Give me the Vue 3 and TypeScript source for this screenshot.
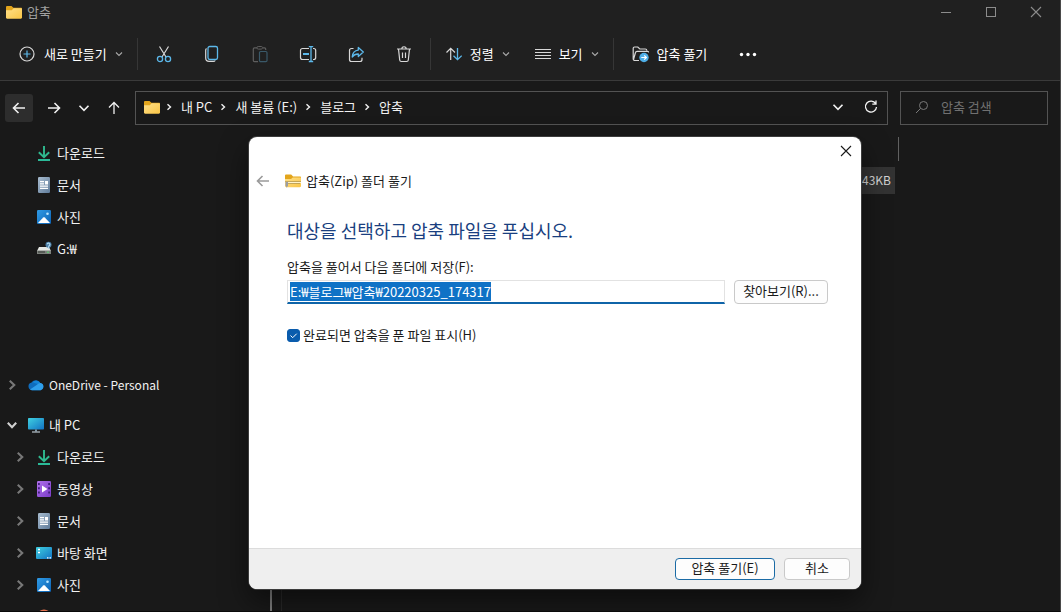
<script setup lang="ts">
import { onMounted, ref } from 'vue'

interface TreeItem {
  label: string
  icon: string
  level: number
  state?: 'open' | 'closed'
  look?: string
}

const quickItems: TreeItem[] = [
  { label: '다운로드', icon: 'download', level: 1 },
  { label: '문서', icon: 'document', level: 1 },
  { label: '사진', icon: 'picture', level: 1 },
  { label: 'G:₩', icon: 'drive', level: 1 },
]

const treeItems: TreeItem[] = [
  { label: 'OneDrive - Personal', icon: 'cloud', level: 0, state: 'closed', look: 'latin' },
  { label: '내 PC', icon: 'pc', level: 0, state: 'open', look: 'spaced' },
  { label: '다운로드', icon: 'download', level: 1, state: 'closed' },
  { label: '동영상', icon: 'video', level: 1, state: 'closed' },
  { label: '문서', icon: 'document', level: 1, state: 'closed' },
  { label: '바탕 화면', icon: 'desktop', level: 1, state: 'closed' },
  { label: '사진', icon: 'picture', level: 1, state: 'closed' },
  { label: '', icon: 'music', level: 1 },
]

const iconCommands = [
  { icon: 'cut', disabled: false },
  { icon: 'copy', disabled: false },
  { icon: 'paste', disabled: true },
  { icon: 'rename', disabled: false },
  { icon: 'share', disabled: false },
  { icon: 'trash', disabled: false },
]

const crumbs = ['내 PC', '새 볼륨 (E:)', '블로그', '압축']

const path = ref('E:₩블로그₩압축₩20220325_174317')
const showFiles = ref(true)
const query = ref('')
const pathInput = ref<HTMLInputElement | null>(null)

onMounted(() => {
  pathInput.value?.focus()
  pathInput.value?.select()
})
</script>

<template>
  <svg class="sprite" aria-hidden="true">
    <defs>
      <linearGradient id="gFolder" x1="0" y1="0" x2="1" y2="1"><stop offset="0" stop-color="#ffe08a" /><stop offset="1" stop-color="#f9c545" /></linearGradient>
      <linearGradient id="gDoc" x1="0" y1="0" x2="1" y2="1"><stop offset="0" stop-color="#a9bdd0" /><stop offset="1" stop-color="#5f7b99" /></linearGradient>
      <linearGradient id="gPic" x1="0" y1="0" x2="1" y2="1"><stop offset="0" stop-color="#2f9be6" /><stop offset="1" stop-color="#0c62b4" /></linearGradient>
      <linearGradient id="gPc" x1="0" y1="0" x2="1" y2="1"><stop offset="0" stop-color="#3fd0e0" /><stop offset="1" stop-color="#1272c4" /></linearGradient>
      <linearGradient id="gVid" x1="0" y1="0" x2="1" y2="1"><stop offset="0" stop-color="#b070ea" /><stop offset="1" stop-color="#7a3cc8" /></linearGradient>
    </defs>
    <symbol id="folder" viewBox="0 0 18 16">
      <path d="M1 3.2C1 2.3 1.6 2 2.3 2h4.2l1.9 1.8H16c.7 0 1 .5 1 1V8H1z" fill="#e3a51c" />
      <path d="M1 6.2h5.8L8.6 4.3H16c.7 0 1 .4 1 1v8.200c0 .7-.4 1.200-1.200 1.200H2.200c-.8 0-1.200-.5-1.200-1.200z" fill="url(#gFolder)" />
    </symbol>
    <symbol id="zip" viewBox="0 0 18 16">
      <path d="M1 2.500C1 1.800 1.500 1.400 2.200 1.400h5l1.900 2H16c.7 0 1 .5 1 1V8H1z" fill="#e3a51c" />
      <path d="M1 6h6l1.800-1.500H16c.7 0 1 .4 1 1v7.500c0 .7-.4 1.200-1.200 1.200H2.200C1.400 14.200 1 13.700 1 13z" fill="url(#gFolder)" />
      <path d="M1.500 8.500h15" stroke="#8a7a4c" stroke-width="1" stroke-dasharray="1 1" />
      <path d="M2 9.500h15" stroke="#fff3cb" stroke-width="1" />
      <path d="M2.500 10.500h14" stroke="#8a7a4c" stroke-width="1" stroke-dasharray="1 1" />
      <path d="M1.500 9h2.500v3.500l-1.200 2.300-1.300-2.300z" fill="#9b9da2" />
    </symbol>
    <symbol id="download" viewBox="0 0 16 16">
      <path d="M8 1v11M2.800 7.200 8 12.200l5.200-5" stroke="#2fb98f" stroke-width="1.900" fill="none" />
      <path d="M2 15h12" stroke="#2dc3a0" stroke-width="1.900" />
    </symbol>
    <symbol id="document" viewBox="0 0 16 16">
      <rect x="2" y="0" width="12" height="16" rx="1.200" fill="url(#gDoc)" />
      <path d="M4 4.700h4M4 6.900h4M4 9.100h8M4 11.300h8" stroke="#fff" stroke-width="1.200" />
      <rect x="9" y="4" width="3" height="3.500" fill="#fff" />
    </symbol>
    <symbol id="picture" viewBox="0 0 16 16">
      <rect x="1" y="1" width="14" height="14" rx="1.200" fill="url(#gPic)" />
      <path d="M2 14 7.200 8.600c.5-.5 1.100-.5 1.600 0L14 14z" fill="#fff" />
      <circle cx="11.500" cy="4.800" r="1.300" fill="#b9e6ff" />
    </symbol>
    <symbol id="drive" viewBox="0 0 16 16">
      <path d="M3 6h10l2 4H1z" fill="#e6e8e4" />
      <path d="M1 9.500h14v3.500H1z" fill="#7d817c" />
      <path d="M2 11h7" stroke="#313431" /><path d="M11 11.200h2" stroke="#54da70" />
      <circle cx="12.500" cy="3.800" r="3" fill="#4d7fa6" />
      <path d="M11.300 3.300a1.300 1.300 0 1 1 1.900 1.300c-.6.400-.6.900-.6 3.400" fill="none" stroke="#b4dbf2" stroke-width="1.200" />
    </symbol>
    <symbol id="cloud" viewBox="0 0 16 16">
      <path d="M4 13.200a3.900 3.900 0 0 1-.4-7.700A5 5 0 0 1 12.200 6a3.700 3.700 0 0 1 .4 7.200z" fill="#0f6cbd" />
      <path d="M4.600 5.200A5 5 0 0 1 12.200 6c-1.200 0-2 .4-2.700 1z" fill="#1484d8" />
      <path d="M2 12.500 9 7.800A3.800 3.800 0 0 1 12.600 6a3.700 3.700 0 0 1 0 7.200H4c-.8 0-1.500-.3-2-.7z" fill="#2f9fec" />
    </symbol>
    <symbol id="pc" viewBox="0 0 16 16">
      <rect x="0" y="1" width="16" height="11.500" rx=".8" fill="url(#gPc)" />
      <path d="M7 12.500h2v2H7z" fill="#7f98a8" /><path d="M4 15h8" stroke="#b7c4cc" stroke-width="1.200" />
    </symbol>
    <symbol id="video" viewBox="0 0 16 16">
      <rect x="1" y="0" width="14" height="16" rx="1.200" fill="url(#gVid)" />
      <path d="M2.900 2v13M13.100 2v13" stroke="#43207c" stroke-width="1.800" stroke-dasharray="2 2.300" />
      <path d="M6 4.500v7L11.500 8z" fill="#fff" />
    </symbol>
    <symbol id="desktop" viewBox="0 0 16 16">
      <rect x="0" y="2" width="16" height="12" rx="1" fill="url(#gPc)" />
      <path d="M2 4.500h2M2 7.500h2" stroke="#fff" stroke-width="1.600" />
      <path d="M11 12.800h1.500M13.500 12.800H15" stroke="#fff" stroke-width="1.200" />
    </symbol>
    <symbol id="music" viewBox="0 0 16 16"><circle cx="8" cy="8" r="7.500" fill="#e3714f" /></symbol>

    <symbol id="new" viewBox="0 0 18 18">
      <circle cx="9" cy="9" r="7" fill="none" stroke="#d8d8d8" stroke-width="1.200" />
      <path d="M9 5.500v7M5.500 9h7" stroke="#5cb8ea" stroke-width="1.200" />
    </symbol>
    <symbol id="cut" viewBox="0 0 18 18">
      <path d="M4.500 1.500 11 12M13.500 1.500 7 12" stroke="#d8d8d8" stroke-width="1.200" />
      <circle cx="5" cy="14" r="2.600" fill="none" stroke="#5cb8ea" stroke-width="1.300" />
      <circle cx="13" cy="14" r="2.600" fill="none" stroke="#5cb8ea" stroke-width="1.300" />
    </symbol>
    <symbol id="copy" viewBox="0 0 18 18">
      <path d="M3.500 3.500C2.900 4 2.700 4.500 2.700 5.200V13c0 2.200 1.200 3.400 3.400 3.400h4.400c.8 0 1.300-.3 1.700-.9" fill="none" stroke="#d8d8d8" stroke-width="1.200" />
      <rect x="5" y="1.500" width="9.500" height="13" rx="1.800" fill="none" stroke="#5cb8ea" stroke-width="1.300" />
    </symbol>
    <symbol id="paste" viewBox="0 0 18 18">
      <path d="M6 2.800H3.500c-.7 0-1.200.5-1.200 1.200v11.500c0 .7.5 1.200 1.200 1.200H7M12 2.800h1.500c.7 0 1.200.5 1.200 1.200v1" fill="none" stroke="#5e5e5e" stroke-width="1.200" />
      <rect x="6" y="1.500" width="5.500" height="2.600" rx="1.200" fill="none" stroke="#5e5e5e" />
      <rect x="8.500" y="6.500" width="7.500" height="10.200" rx="1.200" fill="none" stroke="#3a5969" stroke-width="1.200" />
    </symbol>
    <symbol id="rename" viewBox="0 0 18 18">
      <path d="M10 3.500H3.500c-1.200 0-2 .8-2 2v7c0 1.200.8 2 2 2H10M14 3.500h.7c1.200 0 2 .8 2 2v7c0 1.200-.8 2-2 2H14" fill="none" stroke="#d8d8d8" stroke-width="1.200" />
      <path d="M4 9h6" stroke="#5cb8ea" stroke-width="2" />
      <path d="M12 2v14.500M9.800 1.700h4.400M9.800 16.500h4.400" stroke="#5cb8ea" stroke-width="1.300" />
    </symbol>
    <symbol id="share" viewBox="0 0 18 18">
      <path d="M6.500 3.500h-2c-1.200 0-2 .8-2 2v9c0 1.200.8 2 2 2h8.500c1.200 0 2-.8 2-2v-1.700" fill="none" stroke="#d8d8d8" stroke-width="1.200" />
      <path d="M11.300 2.500 16.300 7l-5 4.500V9C8.500 8.900 6.700 9.900 5.200 12c.3-4 2.600-6.600 6.100-6.900z" fill="none" stroke="#5cb8ea" stroke-width="1.300" stroke-linejoin="round" />
    </symbol>
    <symbol id="trash" viewBox="0 0 18 18">
      <path d="M2 4h14M6.800 4c0-3 4.400-3 4.400 0M3.500 4l1.200 11c.1.900.7 1.500 1.600 1.500h5.400c.9 0 1.500-.6 1.600-1.500l1.200-11M7.500 7.500v5.500M10.500 7.500v5.500" fill="none" stroke="#d8d8d8" stroke-width="1.200" />
    </symbol>
    <symbol id="sort" viewBox="0 0 16 16">
      <path d="M4.700 14V2.500M.5 6.500l4.200-4.200L9 6.500" fill="none" stroke="#d8d8d8" stroke-width="1.200" />
      <path d="M11.500 2v11.500M7.500 9.700l4 4 4.200-4" fill="none" stroke="#5cb8ea" stroke-width="1.300" />
    </symbol>
    <symbol id="list" viewBox="0 0 16 16">
      <path d="M0 3.500h16M0 6.500h16M0 9.500h16M0 12.500h16" stroke="#d8d8d8" />
    </symbol>
    <symbol id="extract" viewBox="0 0 18 18">
      <path d="M8 15.500H4c-1 0-1.800-.8-1.800-1.800V3.300c0-.8.600-1.300 1.300-1.300h3.300l2 2h5.500c1 0 1.500.7 1.500 1.500M2.500 14.500l2-7c.2-.8.700-1.200 1.500-1.200h10.500c.8 0 1.100.4 1 1.200" fill="none" stroke="#d8d8d8" stroke-width="1.200" />
      <circle cx="13" cy="12.500" r="4.700" fill="#4eaee6" />
      <path d="M10.300 12.500h5M13.200 10.300l2.200 2.200-2.200 2.200" fill="none" stroke="#fff" stroke-width="1.200" />
    </symbol>
    <symbol id="chevron" viewBox="0 0 8 8"><path d="m1 2.500 3 3 3-3" fill="none" stroke="currentColor" stroke-width="1.100" /></symbol>
    <symbol id="angle" viewBox="0 0 8 8"><path d="M2.500 1.200 5.500 4 2.500 6.800" fill="none" stroke="currentColor" stroke-width="1.400" /></symbol>
    <symbol id="arrow" viewBox="0 0 16 16"><path d="M14 8H2.500M7.500 3 2.500 8l5 5" fill="none" stroke="currentColor" stroke-width="1.600" /></symbol>
    <symbol id="cross" viewBox="0 0 12 12"><path d="m1 1 10 10M11 1 1 11" fill="none" stroke="currentColor" stroke-width="1.100" /></symbol>
  </svg>

  <div class="window">
    <header class="titlebar">
      <svg class="i18x16"><use href="#folder" /></svg>
      <h1 class="window-title">압축</h1>
      <div class="controls">
        <button type="button" aria-label="최소화"><svg class="i12" viewBox="0 0 12 12"><path d="M1 6.500h10" stroke="currentColor" /></svg></button>
        <button type="button" aria-label="최대화"><svg class="i12" viewBox="0 0 12 12"><rect x="1.500" y="1.500" width="9" height="9" fill="none" stroke="currentColor" /></svg></button>
        <button type="button" aria-label="닫기"><svg class="i12"><use href="#cross" /></svg></button>
      </div>
    </header>

    <div class="commands">
      <button type="button" class="command"><svg class="i18"><use href="#new" /></svg><span>새로 만들기</span><svg class="i8"><use href="#chevron" /></svg></button>
      <span class="rule"></span>
      <button v-for="c in iconCommands" :key="c.icon" type="button" class="icon-command" :disabled="c.disabled" :aria-label="c.icon">
        <svg class="i18"><use :href="'#' + c.icon" /></svg>
      </button>
      <span class="rule"></span>
      <button type="button" class="command"><svg class="i16"><use href="#sort" /></svg><span>정렬</span><svg class="i8"><use href="#chevron" /></svg></button>
      <button type="button" class="command"><svg class="i16"><use href="#list" /></svg><span>보기</span><svg class="i8"><use href="#chevron" /></svg></button>
      <span class="rule"></span>
      <button type="button" class="command extract"><svg class="i18"><use href="#extract" /></svg><span>압축 풀기</span></button>
      <button type="button" class="icon-command" aria-label="더 보기">
        <svg class="i18" viewBox="0 0 18 18"><circle cx="2.500" cy="9.500" r="1.700" fill="#fff" /><circle cx="9" cy="9.500" r="1.700" fill="#fff" /><circle cx="15.500" cy="9.500" r="1.700" fill="#fff" /></svg>
      </button>
    </div>

    <nav class="navigation">
      <button type="button" class="nav-button current" aria-label="뒤로"><svg class="i16"><use href="#arrow" /></svg></button>
      <button type="button" class="nav-button" aria-label="앞으로"><svg class="i16 flip"><use href="#arrow" /></svg></button>
      <button type="button" class="nav-button narrow" aria-label="최근 위치"><svg class="i12"><use href="#chevron" /></svg></button>
      <button type="button" class="nav-button" aria-label="위로"><svg class="i16" viewBox="0 0 16 16"><path d="M8 14V2.500M3 7.500l5-5 5 5" fill="none" stroke="currentColor" stroke-width="1.300" /></svg></button>
      <div class="address">
        <svg class="i18x16"><use href="#folder" /></svg>
        <ol class="crumbs">
          <li v-for="c in crumbs" :key="c"><svg class="i8"><use href="#angle" /></svg><a href="#">{{ c }}</a></li>
        </ol>
        <button type="button" class="address-button" aria-label="이전 위치"><svg class="i12"><use href="#chevron" /></svg></button>
        <button type="button" class="address-button" aria-label="새로 고침">
          <svg class="i16" viewBox="0 0 16 16"><path d="M12.700 4.700A5.500 5.500 0 1 0 13.500 8M13 1.500v3.700H9.300" fill="none" stroke="currentColor" stroke-width="1.300" /></svg>
        </button>
      </div>
      <label class="search">
        <svg class="i14" viewBox="0 0 14 14"><circle cx="8.500" cy="5.500" r="4" fill="none" stroke="currentColor" /><path d="M5.500 8.500 1 13" stroke="currentColor" /></svg>
        <input v-model="query" type="search" placeholder="압축 검색" aria-label="압축 검색" />
      </label>
    </nav>

    <div class="content">
      <aside class="sidebar">
        <ul class="tree quick">
          <li v-for="item in quickItems" :key="item.label" class="tree-row nested">
            <span class="expander"></span>
            <svg class="i16"><use :href="'#' + item.icon" /></svg>
            <span>{{ item.label }}</span>
          </li>
        </ul>
        <ul class="tree">
          <li v-for="item in treeItems" :key="item.icon" class="tree-row" :class="[item.look, { nested: item.level === 1 }]">
            <span class="expander" :class="item.state"><svg v-if="item.state" class="i12"><use href="#angle" /></svg></span>
            <svg class="i16"><use :href="'#' + item.icon" /></svg>
            <span>{{ item.label }}</span>
          </li>
        </ul>
      </aside>
      <main class="files">
        <div class="columns"><span class="c-name"></span><span class="c-date"></span><span class="c-type"></span><span class="c-size"></span></div>
        <div class="file-row">543KB</div>
      </main>
    </div>

    <section class="dialog" role="dialog" aria-labelledby="dialog-title">
      <div class="dialog-top"><button type="button" class="dialog-close" aria-label="닫기"><svg class="i12"><use href="#cross" /></svg></button></div>
      <header class="dialog-header">
        <button type="button" class="dialog-back" aria-label="뒤로" disabled><svg class="i16"><use href="#arrow" /></svg></button>
        <svg class="i18x16"><use href="#zip" /></svg>
        <span id="dialog-title">압축(Zip) 폴더 풀기</span>
      </header>
      <form class="dialog-body" @submit.prevent>
        <h2>대상을 선택하고 압축 파일을 푸십시오.</h2>
        <label class="path-label" for="path">압축을 풀어서 다음 폴더에 저장(F):</label>
        <div class="path-row">
          <input id="path" ref="pathInput" v-model="path" type="text" spellcheck="false" />
          <button type="button" class="push browse">찾아보기(R)...</button>
        </div>
        <label class="check">
          <input v-model="showFiles" type="checkbox" />
          <svg v-if="showFiles" class="tick" viewBox="0 0 13 13"><path d="m3.500 6.500 2.200 2.200 4-4" fill="none" stroke="#fff" /></svg>
          <span>완료되면 압축을 푼 파일 표시(H)</span>
        </label>
      </form>
      <footer class="dialog-footer">
        <button type="button" class="push primary">압축 풀기(E)</button>
        <button type="button" class="push cancel">취소</button>
      </footer>
    </section>
  </div>
</template>

<style>
body {
  margin: 0;
  background: #191919;
}
</style>

<style scoped>
.window,
.window * {
  box-sizing: border-box;
}
.window {
  position: relative;
  display: flex;
  flex-direction: column;
  height: 100vh;
  overflow: hidden;
  background: #191919;
  border-right: 1px solid #4a4a4a;
  border-bottom: 1px solid #0a0a0a;
  color: #f2f2f2;
  font: 13px/20px "Noto Sans CJK KR", sans-serif;
}
button,
input {
  font: inherit;
  color: inherit;
  margin: 0;
}
button {
  display: flex;
  align-items: center;
  justify-content: center;
  padding: 0;
  border: 0;
  background: none;
  white-space: nowrap;
}
svg { flex: none; display: block; }
.sprite { position: absolute; width: 0; height: 0; }
.i8 { width: 8px; height: 8px; }
.i12 { width: 12px; height: 12px; }
.i14 { width: 14px; height: 14px; }
.i16 { width: 16px; height: 16px; }
.i18 { width: 18px; height: 18px; }
.i18x16 { width: 18px; height: 16px; }
.flip { transform: rotate(180deg); }

.titlebar {
  display: flex;
  align-items: center;
  flex: none;
  height: 23px;
  padding-left: 5px;
  gap: 4px;
  background: #202020;
}
.window-title {
  margin: 0;
  font-size: 13px;
  line-height: 20px;
  font-weight: 400;
  color: #a0a0a0;
}
.controls { display: flex; margin-left: auto; padding-right: 2px; color: #8c8c8c; }
.controls button { width: 45px; height: 22px; }

.commands {
  display: flex;
  align-items: center;
  flex: none;
  height: 58px;
  padding: 5px 5px 0;
  background: #202020;
  border-bottom: 1px solid #3a3a3a;
}
.command { height: 36px; padding: 0 12px 0 13px; gap: 8px; color: #fff; }
.command .i8 { color: #a8a8a8; }
.extract { margin: 0 5px 0 2px; }
.icon-command { width: 48px; height: 36px; }
.rule { width: 1px; height: 32px; margin: 0 2px; background: #363636; }

.navigation {
  display: flex;
  align-items: center;
  flex: none;
  gap: 7px;
  padding: 10px 12px 12px 5px;
}
.nav-button { width: 28px; height: 28px; border-radius: 3px; color: #f0f0f0; }
.nav-button.current { background: #2d2d2d; }
.nav-button.narrow { width: 18px; }
.address {
  display: flex;
  align-items: center;
  flex: 1;
  height: 34px;
  padding: 0 2px 2px 7px;
  gap: 4px;
  border: 1px solid #535353;
}
.crumbs {
  display: flex;
  flex: 1;
  gap: 7px;
  margin: 0;
  padding: 0;
  list-style: none;
}
.crumbs li { display: flex; align-items: center; gap: 8px; white-space: nowrap; }
.crumbs a { color: inherit; text-decoration: none; }
.address-button { width: 29px; height: 30px; }
.search {
  display: flex;
  align-items: center;
  width: 148px;
  height: 34px;
  margin-left: 5px;
  padding: 0 0 2px 14px;
  gap: 12px;
  border: 1px solid #535353;
  color: #7a7a7a;
}
.search input {
  flex: 1;
  min-width: 0;
  padding: 0;
  border: 0;
  outline: 0;
  background: none;
  appearance: none;
}
.search input::placeholder { color: #707070; opacity: 1; }

.content { display: flex; flex: 1; min-height: 0; }
.sidebar { flex: none; width: 272px; overflow: hidden; border-right: 2px solid #808080; }
.tree { margin: 0; padding: 0; list-style: none; }
.quick { margin-bottom: 104px; }
.tree-row { display: flex; align-items: center; height: 32px; gap: 5px; white-space: nowrap; }
.tree-row.nested { padding-left: 8px; }
.tree-row.spaced { margin-top: 8px; }
.tree-row.latin { font-size: 12px; }
.expander { display: flex; justify-content: center; width: 23px; color: #787878; }
.expander.open { color: #d0d0d0; }
.expander.open svg { transform: rotate(90deg); }

.files { flex: 1; min-width: 0; margin-left: 9px; border-left: 1px solid #292929; }
.columns { display: flex; height: 24px; }
.columns span { border-right: 1px solid #606060; }
.c-name { width: 149px; }
.c-date { width: 124px; }
.c-type { width: 264px; }
.c-size { width: 80px; }
.file-row {
  width: 613px;
  height: 27px;
  margin-top: 6px;
  padding: 3px 4px 0 0;
  background: #333;
  color: #d4d4d4;
  font-size: 12px;
  text-align: right;
}

.dialog {
  position: absolute;
  top: 137px;
  left: 249px;
  display: flex;
  flex-direction: column;
  width: 612px;
  min-height: 452px;
  overflow: hidden;
  border-radius: 8px;
  background: #fff;
  color: #1a1a1a;
  box-shadow: 0 0 0 1px #3c3c3c, 0 12px 28px rgba(0, 0, 0, 0.5);
}
.dialog-top { display: flex; justify-content: flex-end; height: 28px; }
.dialog-close { width: 30px; height: 28px; }
.dialog-header { display: flex; align-items: center; height: 32px; padding-left: 6px; gap: 4px; }
.dialog-back { width: 16px; height: 16px; margin-right: 9px; color: #9a9a9a; }
.dialog-body { flex: 1; padding: 21px 33px 0 38px; }
h2 { margin: 0 0 15px; font-size: 18px; line-height: 24px; font-weight: 400; color: #1a3f80; }
.path-label { display: block; }
.path-row { display: flex; gap: 9px; margin: 3px 0 21px; }
.path-row input {
  flex: 1;
  min-width: 0;
  height: 24px;
  padding: 0 2px;
  border: 1px solid #e2e2e2;
  border-bottom: 2px solid #0f64a8;
  outline: 0;
  background: #fff;
}
.path-row input::selection { background: #0f72c6; color: #fff; }
.push {
  height: 22px;
  padding-bottom: 2px;
  border: 1px solid #c9c9c9;
  border-radius: 4px;
  background: #fdfdfd;
  color: #1a1a1a;
}
.browse { width: 94px; height: 24px; }
.primary { width: 100px; border-color: #1b6ba5; }
.cancel { width: 66px; }
.check { position: relative; display: flex; align-items: center; gap: 3px; }
.check input {
  width: 13px;
  height: 13px;
  border: 1px solid #8a8a8a;
  border-radius: 3px;
  appearance: none;
}
.check input:checked { border-color: #0a5cad; background: #0a5cad; }
.tick {
  position: absolute;
  left: 0;
  width: 13px;
  height: 13px;
  pointer-events: none;
}
.dialog-footer {
  display: flex;
  justify-content: flex-end;
  height: 41px;
  padding: 9px 11px;
  gap: 9px;
  border-top: 1px solid #dcdcdc;
  background: #efefef;
}
</style>
